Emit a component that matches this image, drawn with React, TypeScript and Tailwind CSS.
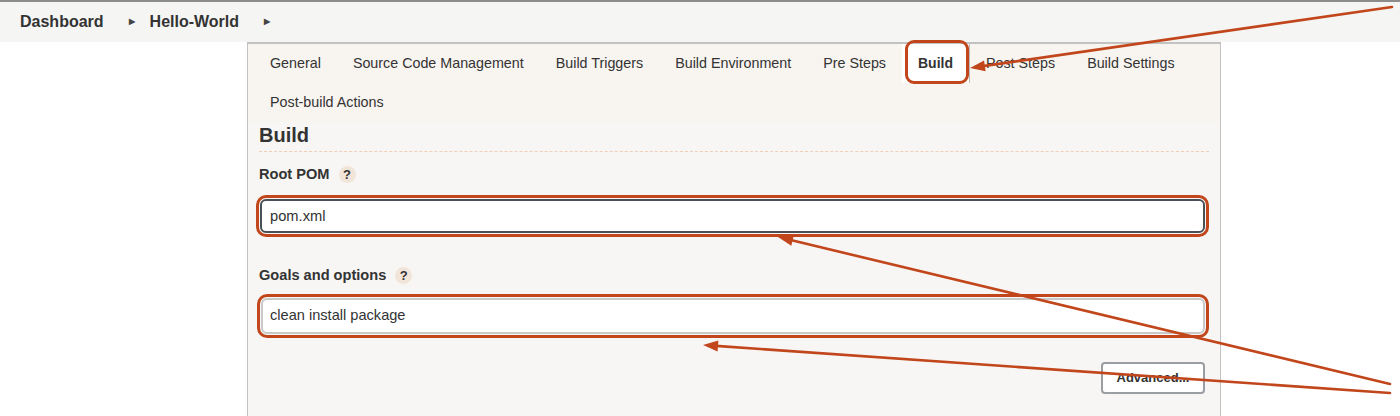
const tabs = [
  "General",
  "Source Code Management",
  "Build Triggers",
  "Build Environment",
  "Pre Steps",
  "Build",
  "Post Steps",
  "Build Settings",
];

const ORANGE = "#c2461b";

// arrow line + head, tip at (x2, y2)
function Arrow({ x1, y1, x2, y2 }: { x1: number; y1: number; x2: number; y2: number }) {
  const dx = x2 - x1;
  const dy = y2 - y1;
  const len = Math.hypot(dx, dy);
  const ux = dx / len;
  const uy = dy / len;
  const hl = 15;
  const hw = 5.5;
  const bx = x2 - ux * hl;
  const by = y2 - uy * hl;
  const pts = `${x2},${y2} ${bx - uy * hw},${by + ux * hw} ${bx + uy * hw},${by - ux * hw}`;
  return (
    <g>
      <line x1={x1} y1={y1} x2={bx + ux * 2} y2={by + uy * 2} stroke={ORANGE} strokeWidth={2.6} strokeLinecap="round" />
      <polygon points={pts} fill={ORANGE} />
    </g>
  );
}

function Help() {
  return (
    <span className="ml-[9px] inline-flex h-[17px] w-[17px] items-center justify-center rounded-full bg-[#f1e4d9] text-[13px] font-bold text-[#333]">
      ?
    </span>
  );
}

export default function App() {
  return (
    <div className="relative h-[416px] w-[1400px] overflow-hidden bg-white font-['Liberation_Sans',Arial,sans-serif] text-[#333]">

      {/* breadcrumb bar */}
      <div className="flex h-[42px] items-center border-t-2 border-[#8c8c8c] bg-[#f5f5f3] pl-5 text-[16px] font-bold text-[#333]">
        <span>Dashboard</span>
        <span className="ml-[25px] mr-[15px] text-[8px] text-[#444]">▶</span>
        <span>Hello-World</span>
        <span className="ml-[25px] text-[8px] text-[#444]">▶</span>
      </div>

      {/* config panel */}
      <div className="ml-[247px] w-[974px] h-[380px] border-l border-r border-t-2 border-[#c2c2c2] bg-[#f7f6f4]">

        {/* tabs */}
        <div className="flex flex-wrap bg-[#f8f4f0] pl-[6px] text-[14.3px]">
          {tabs.map((t) =>
            t === "Build" ? (
              <div key={t} className="relative flex h-[39px] items-center border-r border-[#bbb] bg-white px-4 text-[14px] font-bold">
                {t}
                <div className="absolute left-[3px] right-0 -top-[4px] -bottom-[1px] rounded-[9px] border-[3px] border-[#c2461b]" />
              </div>
            ) : (
              <div key={t} className="flex h-[39px] items-center px-4">
                {t}
              </div>
            )
          )}
          <div className="flex h-[39px] items-center px-4">Post-build Actions</div>
        </div>

        {/* section */}
        <div className="px-[11px] pt-[1px]">
          <h2 className="border-b border-dashed border-[#efcfb8] pb-[3px] text-[20px] font-bold leading-[25px] text-[#333]">
            Build
          </h2>

          <div className="mt-[12px] flex items-center text-[14.6px] font-bold">
            Root POM
            <Help />
          </div>
          <div className="mt-[9px] -ml-[3px] rounded-[10px] border-[3px] border-[#c2461b] p-[1px]">
            <div className="flex h-[34px] items-center rounded-[6px] border-2 border-[#4a4f55] bg-white px-[8px] text-[14.7px]">
              pom.xml
            </div>
          </div>

          <div className="mt-[28px] flex items-center text-[14.6px] font-bold">
            Goals and options
            <Help />
          </div>
          <div className="mt-[7px] -ml-[2px] rounded-[10px] border-[3px] border-[#c2461b] p-[1px]">
            <div className="flex h-[36px] items-center rounded-[6px] border-2 border-[#c9c9c9] bg-white px-[7px] text-[14.6px]">
              clean install package
            </div>
          </div>

          <div className="mt-[24px] flex justify-end pr-[4px]">
            <div className="flex h-[32px] w-[104px] items-center justify-center rounded-[4px] border-2 border-[#9a9ea3] bg-white text-[13px] font-bold text-[#333]">
              Advanced...
            </div>
          </div>
        </div>
      </div>

      {/* annotation arrows */}
      <svg className="pointer-events-none absolute inset-0" width={1400} height={416}>
        <Arrow x1={1392} y1={7} x2={970} y2={68} />
        <Arrow x1={1390} y1={384} x2={778} y2={237} />
        <Arrow x1={1390} y1={393} x2={703} y2={345} />
      </svg>
    </div>
  );
}
